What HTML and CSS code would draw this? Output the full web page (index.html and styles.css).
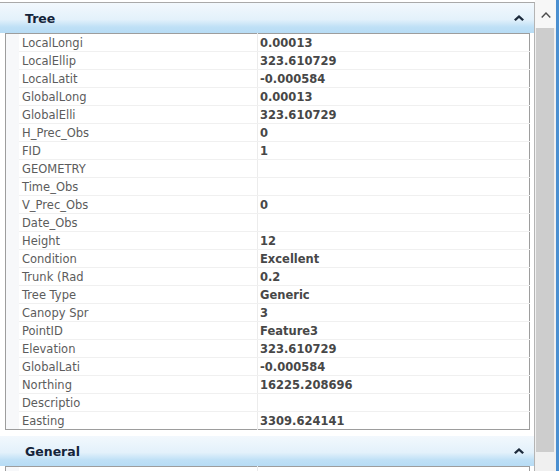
FILE: index.html
```html
<!DOCTYPE html>
<html lang="en">
<head>
  <meta charset="UTF-8">
  <title>Properties</title>
  <link rel="stylesheet" href="styles.css">
</head>
<body>
  <div class="window">
    <div class="panel">
      <!-- Tree group -->
      <section class="group">
        <div class="group-head">
          <span>Tree</span>
          <svg class="collapse" width="10" height="6" viewBox="0 0 10 6"><path d="M0 4.5 L5 0 L10 4.5 L8.3 6 L5 3 L1.7 6 Z" fill="#1d2b3c"/></svg>
        </div>
        <table class="props">
          <tr><td class="gap"></td><td class="name">LocalLongi</td><td class="val">0.00013</td></tr>
          <tr><td class="gap"></td><td class="name">LocalEllip</td><td class="val">323.610729</td></tr>
          <tr><td class="gap"></td><td class="name">LocalLatit</td><td class="val">-0.000584</td></tr>
          <tr><td class="gap"></td><td class="name">GlobalLong</td><td class="val">0.00013</td></tr>
          <tr><td class="gap"></td><td class="name">GlobalElli</td><td class="val">323.610729</td></tr>
          <tr><td class="gap"></td><td class="name">H_Prec_Obs</td><td class="val">0</td></tr>
          <tr><td class="gap"></td><td class="name">FID</td><td class="val">1</td></tr>
          <tr><td class="gap"></td><td class="name">GEOMETRY</td><td class="val"></td></tr>
          <tr><td class="gap"></td><td class="name">Time_Obs</td><td class="val"></td></tr>
          <tr><td class="gap"></td><td class="name">V_Prec_Obs</td><td class="val">0</td></tr>
          <tr><td class="gap"></td><td class="name">Date_Obs</td><td class="val"></td></tr>
          <tr><td class="gap"></td><td class="name">Height</td><td class="val">12</td></tr>
          <tr><td class="gap"></td><td class="name">Condition</td><td class="val">Excellent</td></tr>
          <tr><td class="gap"></td><td class="name">Trunk (Rad</td><td class="val">0.2</td></tr>
          <tr><td class="gap"></td><td class="name">Tree Type</td><td class="val">Generic</td></tr>
          <tr><td class="gap"></td><td class="name">Canopy Spr</td><td class="val">3</td></tr>
          <tr><td class="gap"></td><td class="name">PointID</td><td class="val">Feature3</td></tr>
          <tr><td class="gap"></td><td class="name">Elevation</td><td class="val">323.610729</td></tr>
          <tr><td class="gap"></td><td class="name">GlobalLati</td><td class="val">-0.000584</td></tr>
          <tr><td class="gap"></td><td class="name">Northing</td><td class="val">16225.208696</td></tr>
          <tr><td class="gap"></td><td class="name">Descriptio</td><td class="val"></td></tr>
          <tr><td class="gap"></td><td class="name">Easting</td><td class="val">3309.624141</td></tr>
        </table>
      </section>

      <!-- General group -->
      <section class="group">
        <div class="group-head">
          <span>General</span>
          <svg class="collapse" width="10" height="6" viewBox="0 0 10 6"><path d="M0 4.5 L5 0 L10 4.5 L8.3 6 L5 3 L1.7 6 Z" fill="#1d2b3c"/></svg>
        </div>
        <table class="props">
          <tr><td class="gap"></td><td class="name">&nbsp;</td><td class="val"></td></tr>
        </table>
      </section>
    </div>

    <div class="scrollbar">
      <div class="arrow">
        <svg width="10" height="6" viewBox="0 0 10 6"><path d="M0.7 5.5 L5 1 L9.3 5.5" fill="none" stroke="#4c4c4c" stroke-width="1.4"/></svg>
      </div>
      <div class="thumb"></div>
    </div>
    <div class="edge"></div>
  </div>
</body>
</html>
```

FILE: styles.css
```css
body {
  margin: 0;
  height: 471px;
  overflow: hidden;
  background: #fff;
  font-family: 'DejaVu Sans', Verdana, sans-serif;
}

.window {
  display: flex;
  height: 471px;
}

.panel {
  width: 535px;
  margin-top: 2px;
  border-top: 1px solid #a9a9a9;
  border-right: 1px solid #b4b4b4;
  overflow: hidden;
}

.group-head {
  display: flex;
  align-items: center;
  justify-content: space-between;
  height: 30px;
  padding: 0 10px 0 25px;
  background: linear-gradient(to bottom, #f2f8fd 0%, #e3f1fb 55%, #bfe0f6 80%, #b7dcf5 100%);
  color: #14243a;
  font-size: 12.5px;
  font-weight: bold;
}

.group-head span {
  padding-top: 1px;
}

.collapse {
  margin-top: -1px;
}

.props {
  width: 525px;
  margin: 0 0 6px 5px;
  border: 1px solid #9d9d9d;
  border-collapse: collapse;
  font-size: 11.5px;
}

.props td {
  height: 16px;
  padding: 1px 0 0;
  border-bottom: 1px solid #f0f0f0;
  white-space: nowrap;
}

.props tr:last-child td {
  border-bottom: none;
}

.props .gap {
  width: 13px;
  background: #f7f8fa;
  border-bottom: none;
}

.props .name {
  width: 235px;
  padding-left: 3px;
  color: #5c5c5c;
  border-right: 1px solid #ececec;
}

.props .val {
  padding-left: 2px;
  color: #474747;
  font-weight: bold;
}

.scrollbar {
  width: 21px;
  display: flex;
  flex-direction: column;
  background: #f0f0f0;
}

.scrollbar .arrow {
  height: 26px;
  display: flex;
  align-items: center;
  justify-content: center;
  background: #f7f7f7;
  padding-top: 2px;
}

.scrollbar .thumb {
  height: 424px;
  margin: 0 2px 0 1px;
  background: #cdcdcd;
}

.edge {
  width: 3px;
  background: #4a8fd0;
}
```
